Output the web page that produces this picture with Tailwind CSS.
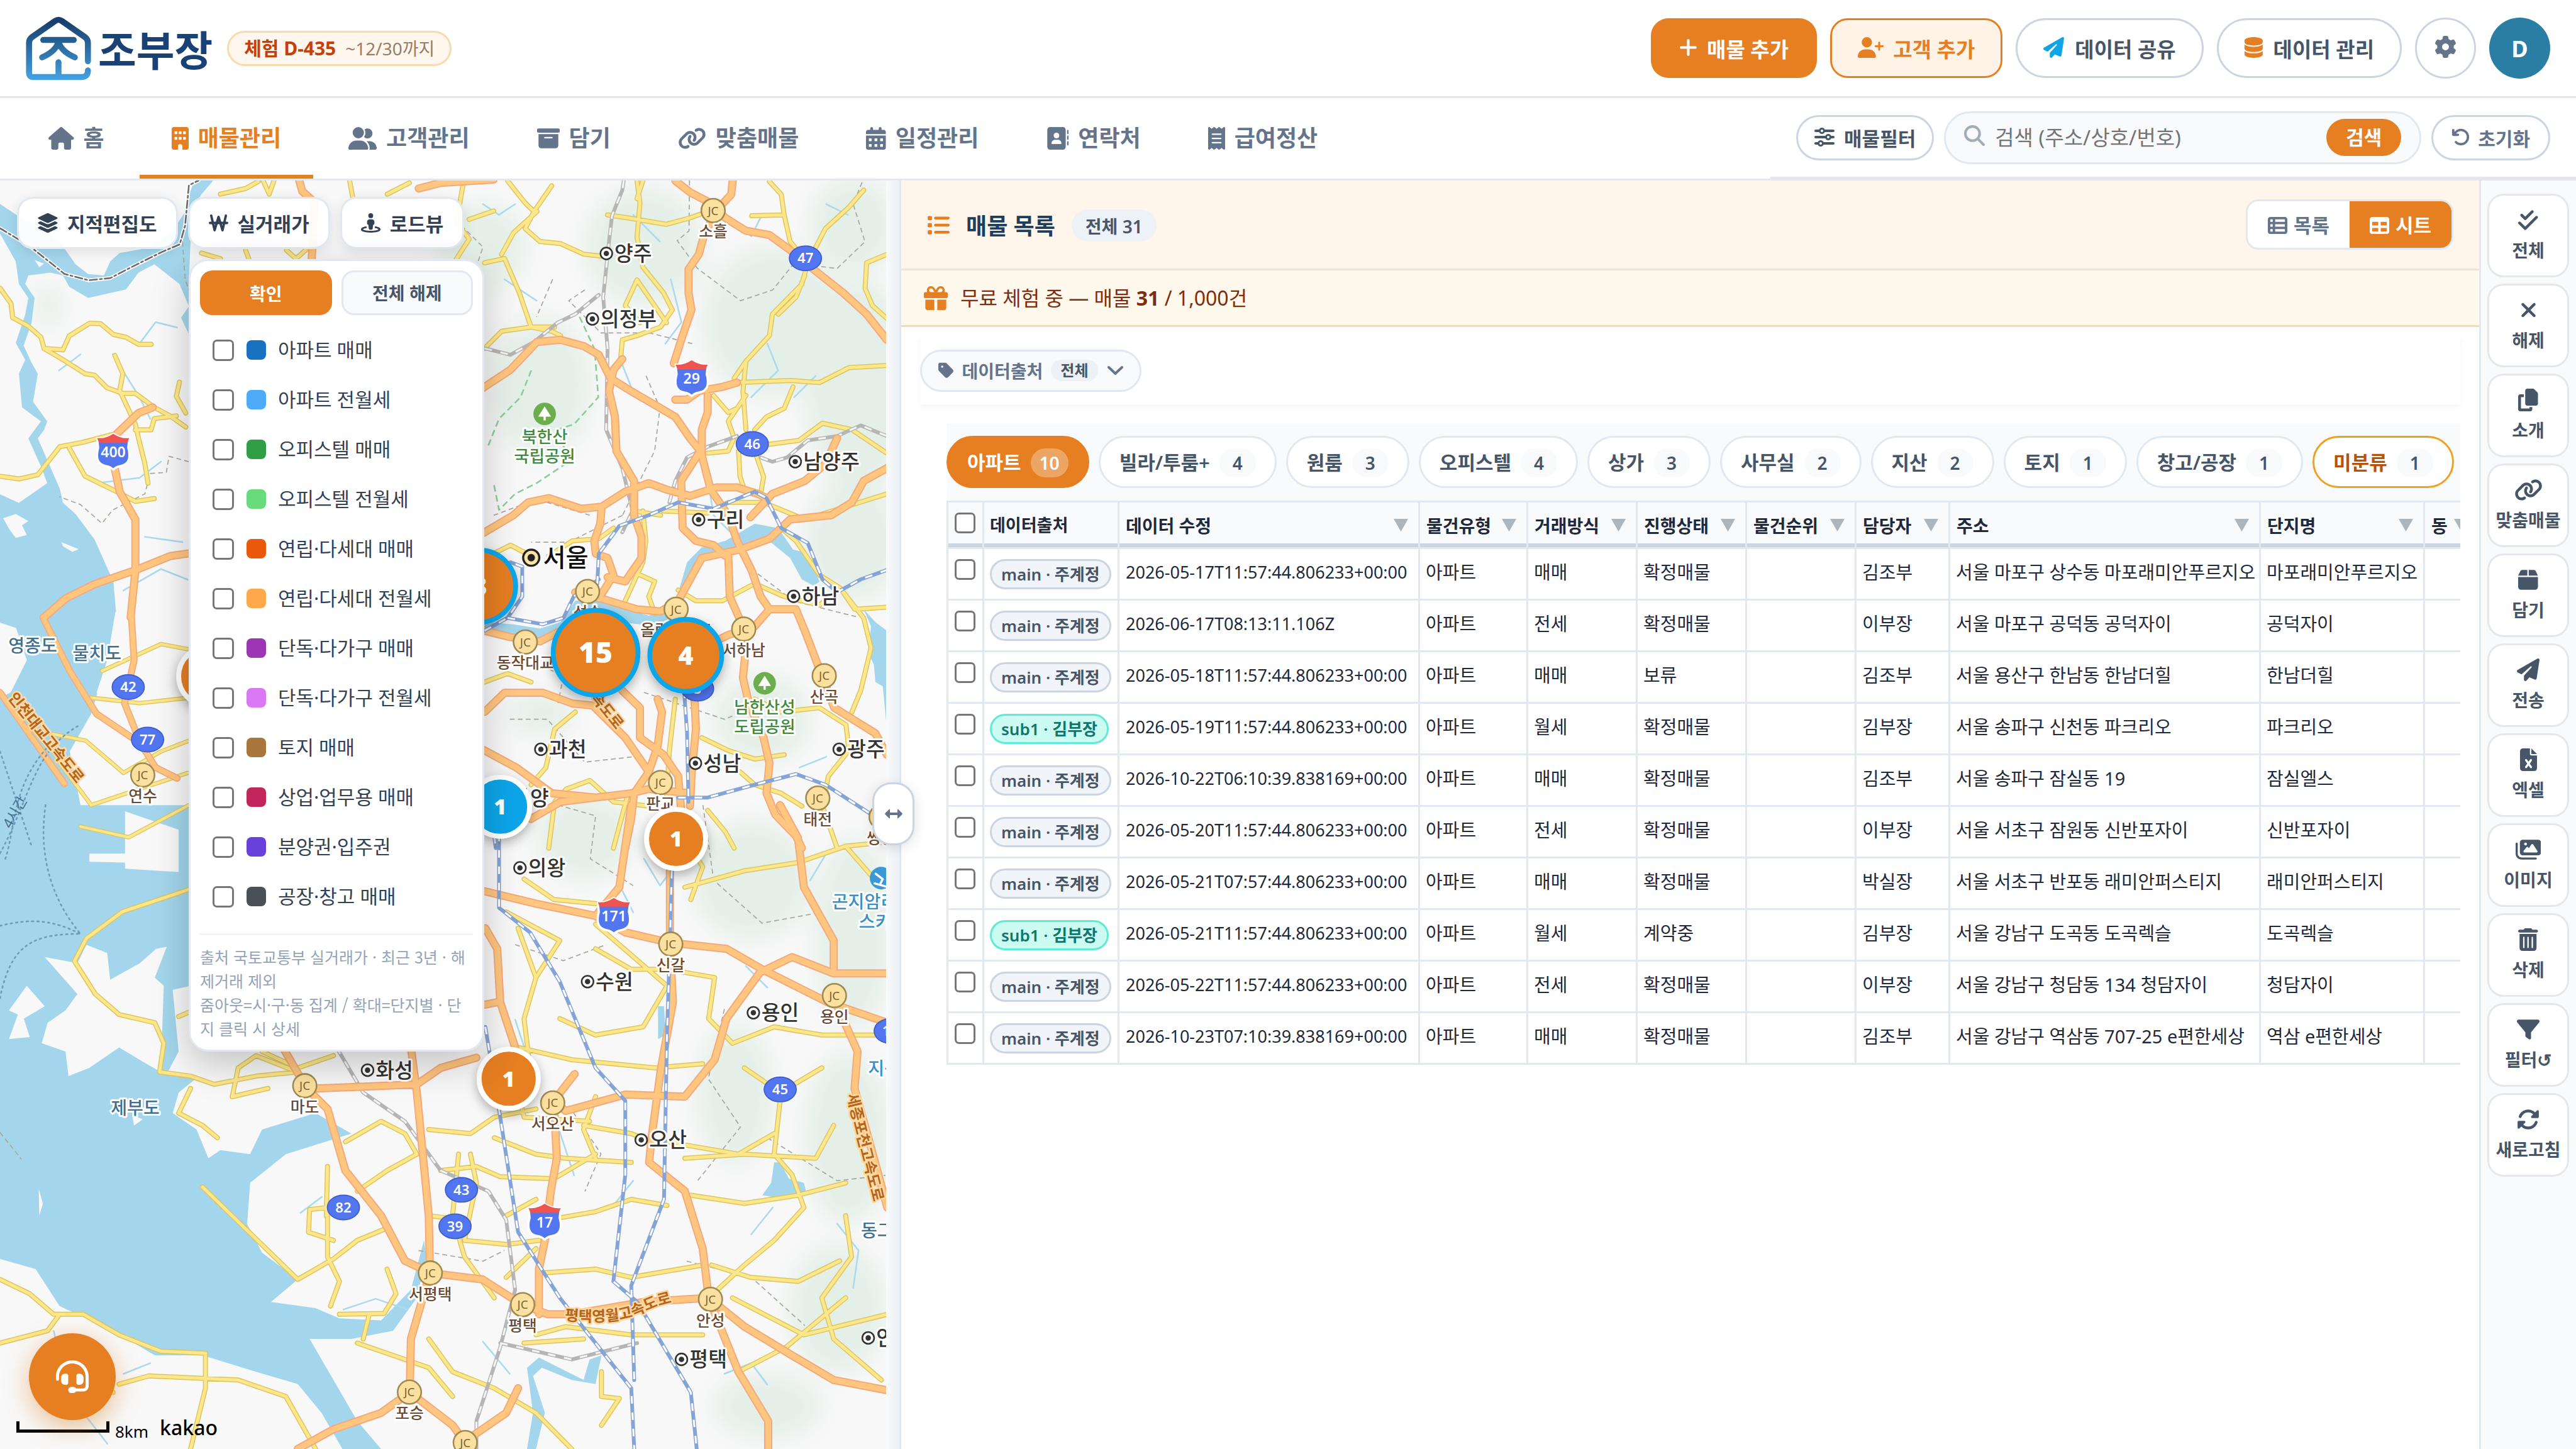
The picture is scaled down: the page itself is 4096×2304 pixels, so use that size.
<!DOCTYPE html>
<html lang="ko">
<head>
    <meta charset="UTF-8">
    <meta name="viewport" content="width=device-width, initial-scale=1.0">
    <title>조부장 - 매물관리</title>
    <script src="https://cdn.jsdelivr.net/npm/@tailwindcss/browser@4"></script>
</head>
<body class="h-screen flex flex-col overflow-hidden bg-white text-[#1e293b] font-['Noto_Sans','Noto_Sans_CJK_KR',sans-serif]">

    <!-- Icon library -->
    <svg class="hidden" aria-hidden="true">
        <defs>
            <path id="i-house" d="M575.8 255.5c0 18-15 32.1-32 32.1h-32l.7 160.2c0 2.7-.2 5.4-.5 8.1V472c0 22.1-17.9 40-40 40H456c-1.1 0-2.2 0-3.3-.1c-1.4 .1-2.8 .1-4.2 .1H416 392c-22.1 0-40-17.9-40-40V448 384c0-17.7-14.3-32-32-32H256c-17.7 0-32 14.3-32 32v64 24c0 22.1-17.9 40-40 40H160 128.1c-1.5 0-3-.1-4.5-.2c-1.2 .1-2.4 .2-3.6 .2H104c-22.1 0-40-17.9-40-40V360c0-.9 0-1.9 .1-2.8V287.6H32c-18 0-32-14-32-32.1c0-9 3-17 10-24L266.4 8c7-7 15-8 22-8s15 2 21 7L564.8 231.5c8 7 12 15 11 24z"/>
            <path id="i-building" d="M48 0C21.5 0 0 21.5 0 48V464c0 26.5 21.5 48 48 48h96V432c0-26.5 21.5-48 48-48s48 21.5 48 48v80h96c26.5 0 48-21.5 48-48V48c0-26.5-21.5-48-48-48H48zM64 240c0-8.8 7.2-16 16-16h32c8.8 0 16 7.2 16 16v32c0 8.8-7.2 16-16 16H80c-8.8 0-16-7.2-16-16V240zm112-16h32c8.8 0 16 7.2 16 16v32c0 8.8-7.2 16-16 16H176c-8.8 0-16-7.2-16-16V240c0-8.8 7.2-16 16-16zm80 16c0-8.8 7.2-16 16-16h32c8.8 0 16 7.2 16 16v32c0 8.8-7.2 16-16 16H272c-8.8 0-16-7.2-16-16V240zM80 96h32c8.8 0 16 7.2 16 16v32c0 8.8-7.2 16-16 16H80c-8.8 0-16-7.2-16-16V112c0-8.8 7.2-16 16-16zm80 16c0-8.8 7.2-16 16-16h32c8.8 0 16 7.2 16 16v32c0 8.8-7.2 16-16 16H176c-8.8 0-16-7.2-16-16V112zM272 96h32c8.8 0 16 7.2 16 16v32c0 8.8-7.2 16-16 16H272c-8.8 0-16-7.2-16-16V112c0-8.8 7.2-16 16-16z"/>
            <path id="i-users" d="M96 128a128 128 0 1 1 256 0A128 128 0 1 1 96 128zM0 482.3C0 383.8 79.8 304 178.3 304h91.4C368.2 304 448 383.8 448 482.3c0 16.4-13.3 29.7-29.7 29.7H29.7C13.3 512 0 498.7 0 482.3zM609.3 512H471.4c5.4-9.4 8.6-20.3 8.6-32v-8c0-60.7-27.1-115.2-69.8-151.8c2.4-.1 4.7-.2 7.1-.2h61.4C567.8 320 640 392.2 640 481.3c0 17-13.8 30.7-30.7 30.7zM432 256c-31 0-59-12.6-79.3-32.9C372.4 196.5 384 163.6 384 128c0-26.8-6.6-52.1-18.3-74.3C384.3 40.1 407.2 32 432 32c61.9 0 112 50.1 112 112s-50.1 112-112 112z"/>
            <path id="i-archive" d="M32 32H480c17.7 0 32 14.3 32 32V96c0 17.7-14.3 32-32 32H32C14.3 128 0 113.7 0 96V64C0 46.3 14.3 32 32 32zm0 128H480V416c0 35.3-28.7 64-64 64H96c-35.3 0-64-28.7-64-64V160zm128 80c0 8.8 7.2 16 16 16H336c8.8 0 16-7.2 16-16s-7.2-16-16-16H176c-8.8 0-16 7.2-16 16z"/>
            <path id="i-link" d="M579.8 267.7c56.5-56.5 56.5-148 0-204.5c-50-50-128.8-56.5-186.3-15.4l-1.6 1.1c-14.4 10.3-17.7 30.3-7.4 44.6s30.3 17.7 44.6 7.4l1.6-1.1c32.1-22.9 76-19.3 103.8 8.6c31.5 31.5 31.5 82.5 0 114L422.3 334.8c-31.5 31.5-82.5 31.5-114 0c-27.9-27.9-31.5-71.8-8.6-103.8l1.1-1.6c10.3-14.4 6.9-34.4-7.4-44.6s-34.4-6.9-44.6 7.4l-1.1 1.6C206.5 251.2 213 330 263 380c56.5 56.5 148 56.5 204.5 0L579.8 267.7zM60.2 244.3c-56.5 56.5-56.5 148 0 204.5c50 50 128.8 56.5 186.3 15.4l1.6-1.1c14.4-10.3 17.7-30.3 7.4-44.6s-30.3-17.7-44.6-7.4l-1.6 1.1c-32.1 22.9-76 19.3-103.8-8.6C74 372 74 321 105.5 289.5L217.7 177.2c31.5-31.5 82.5-31.5 114 0c27.9 27.9 31.5 71.8 8.6 103.9l-1.1 1.6c-10.3 14.4-6.9 34.4 7.4 44.6s34.4 6.9 44.6-7.4l1.1-1.6C433.5 260.8 427 182 377 132c-56.5-56.5-148-56.5-204.5 0L60.2 244.3z"/>
            <path id="i-calendar" d="M128 0c17.7 0 32 14.3 32 32V64H288V32c0-17.7 14.3-32 32-32s32 14.3 32 32V64h48c26.5 0 48 21.5 48 48v48H0V112C0 85.5 21.5 64 48 64H96V32c0-17.7 14.3-32 32-32zM0 192H448V464c0 26.5-21.5 48-48 48H48c-26.5 0-48-21.5-48-48V192zm64 80v32c0 8.8 7.2 16 16 16h32c8.8 0 16-7.2 16-16V272c0-8.8-7.2-16-16-16H80c-8.8 0-16 7.2-16 16zm128 0v32c0 8.8 7.2 16 16 16h32c8.8 0 16-7.2 16-16V272c0-8.8-7.2-16-16-16H208c-8.8 0-16 7.2-16 16zm144-16c-8.8 0-16 7.2-16 16v32c0 8.8 7.2 16 16 16h32c8.8 0 16-7.2 16-16V272c0-8.8-7.2-16-16-16H336zM64 400v32c0 8.8 7.2 16 16 16h32c8.8 0 16-7.2 16-16V400c0-8.8-7.2-16-16-16H80c-8.8 0-16 7.2-16 16zm144-16c-8.8 0-16 7.2-16 16v32c0 8.8 7.2 16 16 16h32c8.8 0 16-7.2 16-16V400c0-8.8-7.2-16-16-16H208zm112 16v32c0 8.8 7.2 16 16 16h32c8.8 0 16-7.2 16-16V400c0-8.8-7.2-16-16-16H336c-8.8 0-16 7.2-16 16z"/>
            <path id="i-contacts" d="M96 0C60.7 0 32 28.7 32 64V448c0 35.3 28.7 64 64 64H384c35.3 0 64-28.7 64-64V64c0-35.3-28.7-64-64-64H96zM208 288h64c44.2 0 80 35.8 80 80c0 8.8-7.2 16-16 16H144c-8.8 0-16-7.2-16-16c0-44.2 35.8-80 80-80zm-32-96a64 64 0 1 1 128 0 64 64 0 1 1 -128 0zM512 80c0-8.8-7.2-16-16-16s-16 7.2-16 16v64c0 8.8 7.2 16 16 16s16-7.2 16-16V80zM496 192c-8.8 0-16 7.2-16 16v64c0 8.8 7.2 16 16 16s16-7.2 16-16V208c0-8.8-7.2-16-16-16zm16 144c0-8.8-7.2-16-16-16s-16 7.2-16 16v64c0 8.8 7.2 16 16 16s16-7.2 16-16V336z"/>
            <path id="i-receipt" d="M14 2.2C22.5-1.7 32.5-.3 39.6 5.8L80 40.4 120.4 5.8c9-7.7 22.3-7.7 31.2 0L192 40.4 232.4 5.8c9-7.7 22.3-7.7 31.2 0L304 40.4 344.4 5.8c7.1-6.1 17.1-7.5 25.6-3.6s14 12.4 14 21.8V488c0 9.4-5.5 17.9-14 21.8s-18.5 2.5-25.6-3.6L304 471.6l-40.4 34.6c-9 7.7-22.3 7.7-31.2 0L192 471.6l-40.4 34.6c-9 7.7-22.3 7.7-31.2 0L80 471.6 39.6 506.2c-7.1 6.1-17.1 7.5-25.6 3.6S0 497.4 0 488V24C0 14.6 5.5 6.1 14 2.2zM96 144c-8.8 0-16 7.2-16 16s7.2 16 16 16H288c8.8 0 16-7.2 16-16s-7.2-16-16-16H96zM80 352c0 8.8 7.2 16 16 16H288c8.8 0 16-7.2 16-16s-7.2-16-16-16H96c-8.8 0-16 7.2-16 16zM96 240c-8.8 0-16 7.2-16 16s7.2 16 16 16H288c8.8 0 16-7.2 16-16s-7.2-16-16-16H96z"/>
            <path id="i-plus" d="M256 80c0-17.7-14.3-32-32-32s-32 14.3-32 32V224H48c-17.7 0-32 14.3-32 32s14.3 32 32 32H192V432c0 17.7 14.3 32 32 32s32-14.3 32-32V288H400c17.7 0 32-14.3 32-32s-14.3-32-32-32H256V80z"/>
            <path id="i-user-plus" d="M96 128a128 128 0 1 1 256 0A128 128 0 1 1 96 128zM0 482.3C0 383.8 79.8 304 178.3 304h91.4C368.2 304 448 383.8 448 482.3c0 16.4-13.3 29.7-29.7 29.7H29.7C13.3 512 0 498.7 0 482.3zM504 312V248H440c-13.3 0-24-10.7-24-24s10.7-24 24-24h64V136c0-13.3 10.7-24 24-24s24 10.7 24 24v64h64c13.3 0 24 10.7 24 24s-10.7 24-24 24H552v64c0 13.3-10.7 24-24 24s-24-10.7-24-24z"/>
            <path id="i-plane" d="M498.1 5.6c10.1 7 15.4 19.1 13.5 31.2l-64 416c-1.5 9.7-7.4 18.2-16 23s-18.9 5.4-28 1.6L284 427.7l-68.5 74.1c-8.9 9.7-22.9 12.9-35.2 8.1S160 493.2 160 480V396.4c0-4 1.5-7.8 4.2-10.7L331.8 202.8c5.8-6.3 5.6-16-.4-22s-15.7-6.4-22-.7L106 360.8 17.7 316.6C7.1 311.3 .3 300.7 0 288.9s5.9-22.8 16.1-28.7l448-256c10.7-6.1 23.9-5.5 34 1.4z"/>
            <path id="i-database" d="M448 80v48c0 44.2-100.3 80-224 80S0 172.2 0 128V80C0 35.8 100.3 0 224 0S448 35.8 448 80zM393.2 214.7c20.8-7.4 39.9-16.9 54.8-28.6V288c0 44.2-100.3 80-224 80S0 332.2 0 288V186.1c14.9 11.8 34 21.2 54.8 28.6C99.7 230.7 159.5 240 224 240s124.3-9.3 169.2-25.3zM0 346.1c14.9 11.8 34 21.2 54.8 28.6C99.7 390.7 159.5 400 224 400s124.3-9.3 169.2-25.3c20.8-7.4 39.9-16.9 54.8-28.6V432c0 44.2-100.3 80-224 80S0 476.2 0 432V346.1z"/>
            <path id="i-gear" d="M495.9 166.6c3.2 8.7 .5 18.4-6.4 24.6l-43.3 39.4c1.1 8.3 1.7 16.8 1.7 25.4s-.6 17.1-1.7 25.4l43.3 39.4c6.9 6.2 9.6 15.9 6.4 24.6c-4.4 11.9-9.7 23.3-15.8 34.3l-4.7 8.1c-6.6 11-14 21.4-22.1 31.2c-5.9 7.2-15.7 9.6-24.5 6.8l-55.7-17.7c-13.4 10.3-28.2 18.9-44 25.4l-12.5 57.1c-2 9.1-9 16.3-18.2 17.8c-13.8 2.3-28 3.5-42.5 3.5s-28.7-1.2-42.5-3.5c-9.2-1.5-16.2-8.7-18.2-17.8l-12.5-57.1c-15.8-6.5-30.6-15.1-44-25.4L83.1 425.9c-8.8 2.8-18.6 .3-24.5-6.8c-8.1-9.8-15.5-20.2-22.1-31.2l-4.7-8.1c-6.1-11-11.4-22.4-15.8-34.3c-3.2-8.7-.5-18.4 6.4-24.6l43.3-39.4C64.6 273.1 64 264.6 64 256s.6-17.1 1.7-25.4L22.4 191.2c-6.9-6.2-9.6-15.9-6.4-24.6c4.4-11.9 9.7-23.3 15.8-34.3l4.7-8.1c6.6-11 14-21.4 22.1-31.2c5.9-7.2 15.7-9.6 24.5-6.8l55.7 17.7c13.4-10.3 28.2-18.9 44-25.4l12.5-57.1c2-9.1 9-16.3 18.2-17.8C227.3 1.2 241.5 0 256 0s28.7 1.2 42.5 3.5c9.2 1.5 16.2 8.7 18.2 17.8l12.5 57.1c15.8 6.5 30.6 15.1 44 25.4l55.7-17.7c8.8-2.8 18.6-.3 24.5 6.8c8.1 9.8 15.5 20.2 22.1 31.2l4.7 8.1c6.1 11 11.4 22.4 15.8 34.3zM256 336a80 80 0 1 0 0-160 80 80 0 1 0 0 160z"/>
            <path id="i-sliders" d="M0 416c0 17.7 14.3 32 32 32l54.7 0c12.3 28.3 40.5 48 73.3 48s61-19.7 73.3-48L480 448c17.7 0 32-14.3 32-32s-14.3-32-32-32l-246.7 0c-12.3-28.3-40.5-48-73.3-48s-61 19.7-73.3 48L32 384c-17.7 0-32 14.3-32 32zm128 0a32 32 0 1 1 64 0 32 32 0 1 1 -64 0zM320 256a32 32 0 1 1 64 0 32 32 0 1 1 -64 0zm32-80c-32.8 0-61 19.7-73.3 48L32 224c-17.7 0-32 14.3-32 32s14.3 32 32 32l246.7 0c12.3 28.3 40.5 48 73.3 48s61-19.7 73.3-48l54.7 0c17.7 0 32-14.3 32-32s-14.3-32-32-32l-54.7 0c-12.3-28.3-40.5-48-73.3-48zM192 128a32 32 0 1 1 0-64 32 32 0 1 1 0 64zm73.3-64C253 35.7 224.8 16 192 16s-61 19.7-73.3 48L32 64C14.3 64 0 78.3 0 96s14.3 32 32 32l86.7 0c12.3 28.3 40.5 48 73.3 48s61-19.7 73.3-48L480 128c17.7 0 32-14.3 32-32s-14.3-32-32-32L265.3 64z"/>
            <path id="i-search" d="M416 208c0 45.9-14.9 88.3-40 122.7L502.6 457.4c12.5 12.5 12.5 32.8 0 45.3s-32.8 12.5-45.3 0L330.7 376c-34.4 25.2-76.8 40-122.7 40C93.1 416 0 322.9 0 208S93.1 0 208 0S416 93.1 416 208zM208 352a144 144 0 1 0 0-288 144 144 0 1 0 0 288z"/>
            <path id="i-undo" d="M125.7 160H176c17.7 0 32 14.3 32 32s-14.3 32-32 32H48c-17.7 0-32-14.3-32-32V64c0-17.7 14.3-32 32-32s32 14.3 32 32v51.2L97.6 97.6c87.5-87.5 229.3-87.5 316.8 0s87.5 229.3 0 316.8s-229.3 87.5-316.8 0c-12.5-12.5-12.5-32.8 0-45.3s32.8-12.5 45.3 0c62.5 62.5 163.8 62.5 226.3 0s62.5-163.8 0-226.3s-163.8-62.5-226.3 0L125.7 160z"/>
            <path id="i-layers" d="M264.5 5.2c14.9-6.9 32.1-6.9 47 0l218.6 101c8.5 3.9 13.9 12.4 13.9 21.8s-5.4 17.9-13.9 21.8l-218.6 101c-14.9 6.9-32.1 6.9-47 0L45.9 149.8C37.4 145.8 32 137.3 32 128s5.4-17.9 13.9-21.8L264.5 5.2zM476.9 209.6l53.2 24.6c8.5 3.9 13.9 12.4 13.9 21.8s-5.4 17.9-13.9 21.8l-218.6 101c-14.9 6.9-32.1 6.9-47 0L45.9 277.8C37.4 273.8 32 265.3 32 256s5.4-17.9 13.9-21.8l53.2-24.6 152 70.2c23.4 10.8 50.4 10.8 73.8 0l152-70.2zm-152 198.2l152-70.2 53.2 24.6c8.5 3.9 13.9 12.4 13.9 21.8s-5.4 17.9-13.9 21.8l-218.6 101c-14.9 6.9-32.1 6.9-47 0L45.9 405.8C37.4 401.8 32 393.3 32 384s5.4-17.9 13.9-21.8l53.2-24.6 152 70.2c23.4 10.8 50.4 10.8 73.8 0z"/>
            <path id="i-street" d="M320 64A64 64 0 1 0 192 64a64 64 0 1 0 128 0zm-96 96c-35.3 0-64 28.7-64 64v48c0 17.7 14.3 32 32 32h1.8l11.1 99.5c1.8 16.2 15.5 28.5 31.8 28.5h38.7c16.3 0 30-12.3 31.8-28.5L318.2 304H320c17.7 0 32-14.3 32-32V224c0-35.3-28.7-64-64-64H224zM132.3 394.2c13-2.4 21.7-14.9 19.3-27.9s-14.9-21.7-27.9-19.3c-32.4 5.9-60.9 14.2-82 24.8c-10.5 5.3-20.3 11.7-27.8 19.6C6.4 399.5 0 410.5 0 424c0 21.4 15.5 36.1 29.1 45c14.7 9.6 34.3 17.3 56.4 23.4C130.2 504.7 190.4 512 256 512s125.8-7.3 170.4-19.6c22.1-6.1 41.8-13.8 56.4-23.4c13.7-8.9 29.1-23.6 29.1-45c0-13.5-6.4-24.5-14-32.6c-7.5-7.9-17.3-14.3-27.8-19.6c-21-10.6-49.5-18.9-82-24.8c-13-2.4-25.5 6.3-27.9 19.3s6.3 25.5 19.3 27.9c30.2 5.5 53.7 12.8 69 20.5c3.2 1.6 5.8 3.1 7.9 4.5c3.6 2.4 3.6 7.2 0 9.6c-8.8 5.7-23.1 11.8-43 17.3C374.3 457 318.5 464 256 464s-118.3-7-157.7-17.9c-19.9-5.5-34.2-11.6-43-17.3c-3.6-2.4-3.6-7.2 0-9.6c2.1-1.4 4.8-2.9 7.9-4.5c15.3-7.7 38.8-14.9 69-20.5z"/>
            <path id="i-list" d="M40 48C26.7 48 16 58.7 16 72v48c0 13.3 10.7 24 24 24H88c13.3 0 24-10.7 24-24V72c0-13.3-10.7-24-24-24H40zM192 64c-17.7 0-32 14.3-32 32s14.3 32 32 32H480c17.7 0 32-14.3 32-32s-14.3-32-32-32H192zm0 160c-17.7 0-32 14.3-32 32s14.3 32 32 32H480c17.7 0 32-14.3 32-32s-14.3-32-32-32H192zm0 160c-17.7 0-32 14.3-32 32s14.3 32 32 32H480c17.7 0 32-14.3 32-32s-14.3-32-32-32H192zM16 232v48c0 13.3 10.7 24 24 24H88c13.3 0 24-10.7 24-24V232c0-13.3-10.7-24-24-24H40c-13.3 0-24 10.7-24 24zM40 368c-13.3 0-24 10.7-24 24v48c0 13.3 10.7 24 24 24H88c13.3 0 24-10.7 24-24V392c0-13.3-10.7-24-24-24H40z"/>
            <path id="i-gift" d="M190.5 68.8L225.3 128H224 152c-22.1 0-40-17.9-40-40s17.9-40 40-40h2.2c14.9 0 28.8 7.9 36.3 20.8zM64 88c0 14.4 3.5 28 9.6 40H32c-17.7 0-32 14.3-32 32v64c0 17.7 14.3 32 32 32H480c17.7 0 32-14.3 32-32V160c0-17.7-14.3-32-32-32H438.4c6.1-12 9.6-25.6 9.6-40c0-48.6-39.4-88-88-88h-2.2c-31.9 0-61.5 16.9-77.7 44.4L256 85.5l-24.1-41C215.7 16.9 186.1 0 154.2 0H152C103.4 0 64 39.4 64 88zm336 0c0 22.1-17.9 40-40 40H288h-1.3l34.8-59.2C329.1 55.9 342.9 48 357.8 48H360c22.1 0 40 17.9 40 40zM32 288V464c0 26.5 21.5 48 48 48H224V288H32zM288 512H432c26.5 0 48-21.5 48-48V288H288V512z"/>
            <path id="i-tag" d="M0 80V229.5c0 17 6.7 33.3 18.7 45.3l176 176c25 25 65.5 25 90.5 0L418.7 317.3c25-25 25-65.5 0-90.5l-176-176c-12-12-28.3-18.7-45.3-18.7H48C21.5 32 0 53.5 0 80zm112 32a32 32 0 1 1 0 64 32 32 0 1 1 0-64z"/>
            <path id="i-table-list" d="M0 96C0 60.7 28.7 32 64 32H448c35.3 0 64 28.7 64 64V416c0 35.3-28.7 64-64 64H64c-35.3 0-64-28.7-64-64V96zm64 0v64h64V96H64zm384 0H192v64H448V96zM64 224v64h64V224H64zm384 0H192v64H448V224zM64 352v64h64V352H64zm384 0H192v64H448V352z"/>
            <path id="i-table" d="M64 256V160H224v96H64zm0 64H224v96H64V320zm224 96V320H448v96H288zM448 256H288V160H448v96zM64 32C28.7 32 0 60.7 0 96V416c0 35.3 28.7 64 64 64H448c35.3 0 64-28.7 64-64V96c0-35.3-28.7-64-64-64H64z"/>
            <path id="i-check-double" d="M342.6 86.6c12.5-12.5 12.5-32.8 0-45.3s-32.8-12.5-45.3 0L160 178.7l-57.4-57.4c-12.5-12.5-32.8-12.5-45.3 0s-12.5 32.8 0 45.3l80 80c12.5 12.5 32.8 12.5 45.3 0l160-160zm96 128c12.5-12.5 12.5-32.8 0-45.3s-32.8-12.5-45.3 0L160 402.7 54.6 297.4c-12.5-12.5-32.8-12.5-45.3 0s-12.5 32.8 0 45.3l128 128c12.5 12.5 32.8 12.5 45.3 0l256-256z"/>
            <path id="i-xmark" d="M342.6 150.6c12.5-12.5 12.5-32.8 0-45.3s-32.8-12.5-45.3 0L192 210.7 86.6 105.4c-12.5-12.5-32.8-12.5-45.3 0s-12.5 32.8 0 45.3L146.7 256 41.4 361.4c-12.5 12.5-12.5 32.8 0 45.3s32.8 12.5 45.3 0L192 301.3 297.4 406.6c12.5 12.5 32.8 12.5 45.3 0s12.5-32.8 0-45.3L237.3 256 342.6 150.6z"/>
            <path id="i-copy" d="M208 0H332.1c12.7 0 24.9 5.1 33.9 14.1l67.9 67.9c9 9 14.1 21.2 14.1 33.9V336c0 26.5-21.5 48-48 48H208c-26.5 0-48-21.5-48-48V48c0-26.5 21.5-48 48-48zM48 128h80v64H64V448H256V416h64v48c0 26.5-21.5 48-48 48H48c-26.5 0-48-21.5-48-48V176c0-26.5 21.5-48 48-48z"/>
            <path id="i-box" d="M50.7 58.5L0 160H208V32H93.7C75.5 32 58.9 42.3 50.7 58.5zM240 160H448L397.3 58.5C389.1 42.3 372.5 32 354.3 32H240V160zm208 32H0V416c0 35.3 28.7 64 64 64H384c35.3 0 64-28.7 64-64V192z"/>
            <path id="i-excel" d="M64 0C28.7 0 0 28.7 0 64V448c0 35.3 28.7 64 64 64H320c35.3 0 64-28.7 64-64V160H256c-17.7 0-32-14.3-32-32V0H64zM256 0V128H384L256 0zM155.7 250.2L192 302.1l36.3-51.9c7.6-10.9 22.6-13.5 33.4-5.9s13.5 22.6 5.9 33.4L221.3 344l46.4 66.2c7.6 10.9 5 25.8-5.9 33.4s-25.8 5-33.4-5.9L192 385.8l-36.3 51.9c-7.6 10.9-22.6 13.5-33.4 5.9s-13.5-22.6-5.9-33.4L162.7 344l-46.4-66.2c-7.6-10.9-5-25.8 5.9-33.4s25.8-5 33.4 5.9z"/>
            <path id="i-images" d="M160 32c-35.3 0-64 28.7-64 64V320c0 35.3 28.7 64 64 64H512c35.3 0 64-28.7 64-64V96c0-35.3-28.7-64-64-64H160zM396 138.7l96 144c4.9 7.4 5.4 16.8 1.2 24.6S480.9 320 472 320H328 280 200c-9.2 0-17.6-5.3-21.6-13.6s-2.9-18.2 2.9-25.4l64-80c4.6-5.7 11.4-9 18.7-9s14.2 3.3 18.7 9l17.3 21.6 56-84C360.5 132 368 128 376 128s15.5 4 20 10.7zM192 128a32 32 0 1 1 64 0 32 32 0 1 1 -64 0zM48 120c0-13.3-10.7-24-24-24S0 106.7 0 120V344c0 75.1 60.9 136 136 136H456c13.3 0 24-10.7 24-24s-10.7-24-24-24H136c-48.6 0-88-39.4-88-88V120z"/>
            <path id="i-trash" d="M135.2 17.7C140.6 6.8 151.7 0 163.8 0H284.2c12.1 0 23.2 6.8 28.6 17.7L320 32h96c17.7 0 32 14.3 32 32s-14.3 32-32 32H32C14.3 96 0 81.7 0 64S14.3 32 32 32h96l7.2-14.3zM32 128H416V448c0 35.3-28.7 64-64 64H96c-35.3 0-64-28.7-64-64V128zm96 64c-8.8 0-16 7.2-16 16V432c0 8.8 7.2 16 16 16s16-7.2 16-16V208c0-8.8-7.2-16-16-16zm96 0c-8.8 0-16 7.2-16 16V432c0 8.8 7.2 16 16 16s16-7.2 16-16V208c0-8.8-7.2-16-16-16zm96 0c-8.8 0-16 7.2-16 16V432c0 8.8 7.2 16 16 16s16-7.2 16-16V208c0-8.8-7.2-16-16-16z"/>
            <path id="i-filter" d="M3.9 54.9C10.5 40.9 24.5 32 40 32H472c15.5 0 29.5 8.9 36.1 22.9s4.6 30.5-5.2 42.5L320 320.9V448c0 12.1-6.8 23.2-17.7 28.6s-23.8 4.3-33.5-3l-64-48c-8.1-6-12.8-15.5-12.8-25.6V320.9L9 97.3C-.7 85.4-2.8 68.8 3.9 54.9z"/>
            <path id="i-rotate" d="M142.9 142.9c62.2-62.2 162.7-62.5 225.3-1L327 183c-6.9 6.9-8.9 17.2-5.2 26.2s12.5 14.8 22.2 14.8H463.5H472c13.3 0 24-10.7 24-24V72c0-9.7-5.8-18.5-14.8-22.2s-19.3-1.7-26.2 5.2L413.4 96.6c-87.6-86.5-228.7-86.2-315.8 1C73.2 122 55.6 150.7 44.8 181.4c-5.9 16.7 2.9 34.9 19.5 40.8s34.9-2.9 40.8-19.5c7.7-21.8 20.2-42.3 37.8-59.8zM16 312v7.6 .7V440c0 9.7 5.8 18.5 14.8 22.2s19.3 1.7 26.2-5.2l41.6-41.6c87.6 86.5 228.7 86.2 315.8-1c24.4-24.4 42.1-53.1 52.9-83.7c5.9-16.7-2.9-34.9-19.5-40.8s-34.9 2.9-40.8 19.5c-7.7 21.8-20.2 42.3-37.8 59.8c-62.2 62.2-162.7 62.5-225.3 1L185 329c6.9-6.9 8.9-17.2 5.2-26.2s-12.5-14.8-22.2-14.8H48.4h-.7H40c-13.3 0-24 10.7-24 24z"/>
            <path id="i-headset" d="M256 48C141.1 48 48 141.1 48 256v40c0 13.3-10.7 24-24 24s-24-10.7-24-24V256C0 114.6 114.6 0 256 0S512 114.6 512 256V400.1c0 48.6-39.4 88-88.1 88L313.6 488c-8.3 14.3-23.8 24-41.6 24H240c-26.5 0-48-21.5-48-48s21.5-48 48-48h32c17.8 0 33.3 9.7 41.6 24l110.4 .1c22.1 0 40-17.9 40-40V256c0-114.9-93.1-208-208-208zM144 208h16c17.7 0 32 14.3 32 32V352c0 17.7-14.3 32-32 32H144c-35.3 0-64-28.7-64-64V272c0-35.3 28.7-64 64-64zm224 0c35.3 0 64 28.7 64 64v48c0 35.3-28.7 64-64 64H352c-17.7 0-32-14.3-32-32V240c0-17.7 14.3-32 32-32h16z"/>
        </defs>
    </svg>

    <!-- Header -->
    <header class="flex-none h-[156px] flex items-center justify-between px-[41px] border-b-[3px] border-[#e5e7eb]">
        <div class="flex items-center">
            <a href="#" class="flex items-center" aria-label="조부장">
                <svg class="w-[104px] h-[102px]" viewBox="0 0 120 117" fill="none" stroke="url(#logo-fill)" stroke-width="11" stroke-linejoin="round" stroke-linecap="round">
                    <defs>
                        <linearGradient id="logo-fill" gradientUnits="userSpaceOnUse" x1="0" y1="0" x2="0" y2="117">
                            <stop offset="0.1" stop-color="#18406f"/>
                            <stop offset="1" stop-color="#45a3e3"/>
                        </linearGradient>
                    </defs>
                    <path d="M114 82V48Q114 42 109 38L66 8Q60 4 54 8L11 38Q6 42 6 48V103Q6 111 14 111H102Q114 111 114 99"/>
                    <path d="M32 43H88M60 44Q58 62 30 75M60 44Q62 62 90 75M60 84V110"/>
                </svg>
                <span class="ml-[11px] pt-[4px] text-[66px] leading-[72px] font-bold text-[#1a4173]">조부장</span>
            </a>
            <div class="ml-[23px] h-[56px] px-[24px] flex items-center gap-[15px] rounded-full border-[3px] border-[#fcd9ab] bg-[#fff7ed] text-[28px]">
                <strong class="text-[30px] font-bold text-[#c2410c]">체험 D-435</strong>
                <span class="text-[#9a7b66]">~12/30까지</span>
            </div>
        </div>
        <div class="flex items-center gap-[21px] text-[33px] font-bold">
            <button class="h-[95px] px-[45px] pt-[4px] flex items-center gap-[15px] rounded-[28px] bg-[#e67e22] text-white">
                <svg class="h-[33px] mb-[7px] flex-none" viewBox="0 0 448 512" fill="currentColor"><use href="#i-plus"/></svg>매물 추가
            </button>
            <button class="h-[95px] px-[41px] pt-[4px] flex items-center gap-[15px] rounded-[28px] border-[3px] border-[#e67e22] bg-[#fff3e8] text-[#e67e22]">
                <svg class="h-[33px] mb-[7px] flex-none" viewBox="0 0 640 512" fill="currentColor"><use href="#i-user-plus"/></svg>고객 추가
            </button>
            <button class="h-[95px] px-[41px] pt-[4px] flex items-center gap-[17px] rounded-full border-[3px] border-[#cbd5e1] bg-white text-[#475569]">
                <svg class="h-[33px] mb-[7px] flex-none text-[#0ea5e9]" viewBox="0 0 512 512" fill="currentColor"><use href="#i-plane"/></svg>데이터 공유
            </button>
            <button class="h-[95px] px-[41px] pt-[4px] flex items-center gap-[17px] rounded-full border-[3px] border-[#cbd5e1] bg-white text-[#475569]">
                <svg class="h-[33px] mb-[7px] flex-none text-[#e67e22]" viewBox="0 0 448 512" fill="currentColor"><use href="#i-database"/></svg>데이터 관리
            </button>
            <button class="size-[97px] flex items-center justify-center rounded-full border-[3px] border-[#cbd5e1] bg-white text-[#64748b]" aria-label="설정">
                <svg class="h-[35px] mb-[4px]" viewBox="0 0 512 512" fill="currentColor"><use href="#i-gear"/></svg>
            </button>
            <button class="size-[97px] pt-[3px] rounded-full bg-[#2b7ea3] text-[36px] text-white">D</button>
        </div>
    </header>

    <!-- Navigation -->
    <nav class="flex-none h-[131px] flex items-stretch justify-between border-b-[3px] border-[#e5e7eb]">
        <div class="flex items-stretch gap-[5px] pl-[26px] text-[36px] font-bold text-[#64748b]">
            <a href="#" class="flex items-center gap-[15px] px-[51px]"><svg class="h-[36px] flex-none" viewBox="0 0 576 512" fill="currentColor"><use href="#i-house"/></svg>홈</a>
            <a href="#" class="relative flex items-center gap-[15px] px-[51px] text-[#e67e22] after:absolute after:inset-x-0 after:bottom-0 after:h-[6px] after:bg-[#e67e22]"><svg class="h-[36px] flex-none" viewBox="0 0 384 512" fill="currentColor"><use href="#i-building"/></svg>매물관리</a>
            <a href="#" class="flex items-center gap-[15px] px-[51px]"><svg class="h-[36px] flex-none" viewBox="0 0 640 512" fill="currentColor"><use href="#i-users"/></svg>고객관리</a>
            <a href="#" class="flex items-center gap-[15px] px-[51px]"><svg class="h-[36px] flex-none" viewBox="0 0 512 512" fill="currentColor"><use href="#i-archive"/></svg>담기</a>
            <a href="#" class="flex items-center gap-[15px] px-[51px]"><svg class="h-[36px] flex-none" viewBox="0 0 640 512" fill="currentColor"><use href="#i-link"/></svg>맞춤매물</a>
            <a href="#" class="flex items-center gap-[15px] px-[51px]"><svg class="h-[36px] flex-none" viewBox="0 0 448 512" fill="currentColor"><use href="#i-calendar"/></svg>일정관리</a>
            <a href="#" class="flex items-center gap-[15px] px-[51px]"><svg class="h-[36px] flex-none" viewBox="0 0 512 512" fill="currentColor"><use href="#i-contacts"/></svg>연락처</a>
            <a href="#" class="flex items-center gap-[15px] px-[51px]"><svg class="h-[36px] flex-none" viewBox="0 0 384 512" fill="currentColor"><use href="#i-receipt"/></svg>급여정산</a>
        </div>
        <div class="flex items-center gap-[16px] px-[41px] border-b-[3px] border-[#e5e7eb]">
            <button class="h-[72px] px-[26px] pt-[3px] flex items-center gap-[15px] rounded-full border-[3px] border-[#cbd5e1] bg-white text-[31px] font-bold text-[#475569]">
                <svg class="h-[32px] mb-[5px] flex-none" viewBox="0 0 512 512" fill="currentColor"><use href="#i-sliders"/></svg>매물필터
            </button>
            <form class="w-[759px] h-[84px] px-[29px] flex items-center gap-[16px] rounded-full border-[3px] border-[#e2e8f0] bg-[#f8fafc]">
                <svg class="h-[33px] mb-[6px] flex-none text-[#a3adb8]" viewBox="0 0 512 512" fill="currentColor"><use href="#i-search"/></svg>
                <input type="text" aria-label="검색" placeholder="검색 (주소/상호/번호)" class="flex-1 min-w-0 bg-transparent text-[33px] placeholder:text-[#757575] outline-none">
                <button type="button" class="w-[119px] h-[59px] rounded-full bg-[#e67e22] text-[31px] leading-[59px] font-bold text-white">검색</button>
            </form>
            <button class="h-[72px] px-[29px] pt-[3px] flex items-center gap-[12px] rounded-full border-[3px] border-[#cbd5e1] bg-white text-[30px] font-semibold text-[#64748b]">
                <svg class="h-[30px] mb-[5px] flex-none" viewBox="0 0 512 512" fill="currentColor"><use href="#i-undo"/></svg>초기화
            </button>
        </div>
    </nav>

    <main class="flex-1 min-h-0 flex">
        <!-- Map -->
        <section class="relative w-[34.4%] flex-none overflow-hidden bg-[#f8f8f8]">
            <svg class="absolute inset-0 w-full h-full" viewBox="0 336 1653 2364" preserveAspectRatio="xMinYMin slice" fill="none" stroke-linejoin="round" stroke-linecap="round">
                <defs>
                    <filter id="soft" x="-30%" y="-30%" width="160%" height="160%"><feGaussianBlur stdDeviation="22"/></filter>
                    <filter id="drop" x="-40%" y="-40%" width="180%" height="180%"><feDropShadow dx="0" dy="8" stdDeviation="10" flood-opacity="0.3"/></filter>
                    <g id="motorways">
                        <path class="[vector-effect:non-scaling-stroke]" transform="translate(880 330) scale(.5485 .7972)" d="M690 8L740 35 810 60 860 95 930 125 1010 135 1080 170 1150 210 1260 270 1340 320 1409 380M885 8L880 40 840 70 790 130 770 180 735 215 735 270 745 310 715 370 685 435M-60 540L42 490 130 450 220 385 300 380 380 395 430 415 470 470 540 500 640 540 690 560 740 610 775 640M510 425L480 450 465 500 485 560 490 640 550 710 550 790 575 840 575 890 520 945 460 935M690 520L730 520 770 500 850 490 900 480M800 510L800 550 780 590 780 650 810 730 870 790 900 850 950 920 980 980 1010 1010M775 640L710 710 715 820 760 850 820 860 860 885M-60 860L42 830 140 790 190 760 260 750 370 775 440 770 520 735 600 715 660 730 740 745 830 725 900 725 970 740 1000 750M440 770L435 810 415 850 420 880 460 890 480 930 430 985M1240 610L1200 670 1130 710 1020 740 945 795M1409 680L1330 710 1290 760 1220 790 1080 800 1010 845 910 870 780 890 740 940 700 990 640 1015 560 1010 440 985 350 970M870 880L875 980 920 1050 930 1100 920 1170 940 1230 990 1310 1010 1370 1000 1440 1030 1490 1100 1540 1120 1568M1010 1010L1100 1010 1130 1060 1180 1150 1230 1240 1300 1270 1370 1300 1409 1350M1010 1010L960 1050 870 1070 840 1080M42 1060L130 1075 230 1085 330 1050 420 1010M42 1250L110 1205 240 1205 340 1230 410 1235 520 1310 600 1390M510 1200L570 1240 570 1310 650 1350 700 1400 710 1480M630 1220L645 1250 630 1330 600 1390 550 1440 540 1500 520 1568M-60 1310L42 1340 150 1380 270 1440 420 1450 540 1440 600 1430 740 1440M200 1500L300 1460 420 1450M755 1210L760 1290 745 1400 740 1470"/>
                        <path class="[vector-effect:non-scaling-stroke]" transform="translate(0 1500) scale(1.1098 .7653)" d="M475 590L515 690 550 740 580 890 640 1000 680 1110 725 1140 810 1155 875 1215 920 1240 960 1240 1080 1210 1190 1200 1250 1270 1330 1340 1400 1400 1490 1425M530 690L620 685 700 680 740 640 800 615M690 590L700 700 710 850 720 1000 722 1140 690 1300 688 1430 640 1480 560 1520 500 1568M688 1430L760 1510 780 1550 850 1480 870 1420M800 205L900 240 1000 270 1050 310 1125 335 1220 350 1280 400 1390 480 1490 530M1060 0L1040 200 1000 270M1125 160L1125 340 1130 480 1110 640 1095 800 1090 870 1150 940 1180 1080 1190 1200 1240 1380 1290 1500 1290 1568M1310 0L1340 80 1350 200 1400 330 1400 410 1490 410M1400 470L1440 600 1435 690 1460 820 1490 980M1280 400L1220 520 1200 620 1150 710 1050 705 950 745 930 720 965 655M930 720L935 860 925 940 915 1060 905 1130 905 1240M815 300L835 350 840 480 865 590M1280 405L1330 370 1400 410M800 490L835 480"/>
                        <path class="[vector-effect:non-scaling-stroke]" transform="translate(0 330) scale(.5868 .523)" d="M1330 40L1400 20 1568 8M950 10L960 50 1000 90 990 290M370 915L440 840 485 820M365 1040L380 1120 430 1220 430 1400 415 1568M140 1568L210 1500 300 1450 430 1400 540 1350 600 1340"/>
                        <path d="M245 1150L250 1230 232 1310 262 1385 290 1430 330 1450M80 1150L130 1250 180 1330 262 1385M0 1290L120 1460"/>
                    </g>
                    <g id="roads">
                        <path class="[vector-effect:non-scaling-stroke]" transform="translate(880 330) scale(.5485 .7972)" d="M42 200L110 190 160 270 200 350 270 360 300 370M120 8L180 60 210 80 270 20M210 80L180 120 230 150 300 155 380 180 450 185M100 180L140 130 220 80M560 8L570 60 560 140 580 210 650 270 680 310 640 350 560 370 510 380 505 420M580 8L560 50M460 88L530 95 660 110 740 95 800 80M950 90L1060 88 1050 40 1010 10M1060 88L1080 150 1140 200 1120 250 1020 320 1010 370 930 430 890 470M1140 200L1200 120 1280 70 1330 30M1409 180L1340 200 1335 260 1360 300 1409 330M1040 320L1100 280 1130 230M900 480L1080 475 1180 480 1280 445 1409 440M820 510L870 550 900 540 930 510M930 430L920 500 930 590M960 590L1000 560 1060 540 1090 490M900 540L870 570 890 610 870 640 800 645M1000 625L1110 615 1190 575 1290 590 1409 645M905 640L910 700 930 740M960 640L990 700 980 740M660 340L560 240 520 300 570 340M42 400L100 360 200 350 280 350M650 780L800 785 870 760 990 760 1130 800 1409 740M580 780L590 850 580 900 520 990M540 920L620 945 600 980 620 1020M700 965L760 990 850 990 960 950 1060 980 1180 1000 1250 960 1300 1010 1409 1005M1180 930L1250 960 1330 1030 1355 1100 1320 1200 1290 1250M1050 820L1100 850 1180 930M960 1220L1050 1250 1180 1240 1270 1280 1280 1340 1210 1400 1190 1470 1240 1568M42 890L130 860 200 885M260 885L340 850 430 845 480 820M260 1568L280 1460 320 1430 400 1410 480 1460 600 1470M200 1420L250 1380 280 1290 350 1250M690 1220L670 1340 660 1450M780 1310L870 1340 960 1360 1060 1350M910 1390L960 1420 1050 1440 1120 1470M530 1440L480 1568M800 1480L860 1530 890 1568M550 780L640 790M42 1180L120 1160 200 1180"/>
                        <path class="[vector-effect:non-scaling-stroke]" transform="translate(0 1500) scale(1.1098 .7653)" d="M318 205L205 260 145 325 125 380 160 460 200 510 260 530 275 580 268 650 320 660 360 680 430 660 500 650M320 690L300 750 340 780 365 810M500 650L430 610 400 640 390 710 450 690M340 930L500 1155 560 1105 600 1060 650 1030M555 1220L570 1160 550 1100 550 980 520 985 518 1040 560 1060M550 880L548 1000M570 1240L645 1238 665 1190 650 1130M580 820L640 770 680 800 700 850 650 890 600 940M720 790L790 800 830 760 900 740M740 890L800 880 840 905 930 910 1000 850M830 810L900 850 950 860 1060 870M770 850L760 1000 780 1100 830 1200M790 850L800 920 780 1060 850 1070 905 1060M940 1005L1000 990 1060 960 1120 975M905 1140L1000 1130 1060 1150 1180 1120M1160 950L1250 970 1340 950 1420 920M1150 860L1250 850 1370 860 1400 780M1310 720L1300 850 1330 900 1350 980 1300 1060 1250 1120 1190 1200M1195 1120L1260 1150 1340 1160 1410 1110M1420 1000L1430 1100 1380 1200 1400 1300 1480 1400M1230 1200L1350 1290 1490 1240M1240 1380L1320 1320 1420 1200M0 1155L50 1190 90 1240 140 1240 200 1290 270 1330 345 1335 345 1420 320 1568M0 1310L80 1280 100 1240M200 1410L250 1390 400 1400 480 1440 530 1568M90 1420L190 1430M720 1300L760 1380 830 1420 900 1480 960 1568M600 1310L720 1370 760 1440M900 1290L950 1270 1060 1290 1180 1290M880 1310L980 1300M870 300L900 420 880 520 890 640M850 260L940 330 900 420M880 180L930 230 1000 240M1000 350L1060 400 1120 400 1200 420M940 520L1000 560 1080 540 1120 440 1000 290M870 590L960 620 1100 640 1180 630M1200 420L1190 520 1230 580 1300 540 1380 560 1490 560M1250 640L1310 700 1380 640M980 780L1060 800 1095 820M1000 710L980 790 1000 860M1150 200L1250 160 1340 140 1420 100 1490 90M1140 60L1180 150 1160 230M1420 100L1480 200M620 1240L610 1300M440 600L500 640 560 610M1120 820L1240 850 1300 800M860 640L880 760 990 770M300 515L316 505M1010 1380L1010 1440 1040 1445 1010 1510M720 1000L780 1010M850 1000L900 960M900 1080L850 1150"/>
                        <path class="[vector-effect:non-scaling-stroke]" transform="translate(0 330) scale(.5868 .523)" d="M0 395L35 450 40 500 90 530 130 570 140 610 200 650 270 700 300 705 340 750 390 770 430 770 490 820 540 850 590 890M200 615L220 565 285 520 320 522 360 560 400 570 440 595 480 595M140 610L200 615M365 635L390 700 380 760 430 880 440 930 460 1020 470 1090M570 730L560 780 590 840M430 900L480 900 490 860 560 850M0 1065L60 1075 120 1060 190 960 260 945 380 910M220 965L270 1065 370 1120 430 1155 490 1145M700 60L780 40 820 15M835 10L855 60 870 12M640 270L700 290M780 260L790 290M910 260L940 290 970 260M1110 10L1120 70M1230 60L1300 20M1470 30L1450 160 1490 220 1450 290M1568 120L1490 150"/>
                        <path d="M110 1420L170 1500 260 1470 350 1440M60 1360L160 1380 230 1440 300 1400 352 1380M150 1540L240 1560 352 1500M190 1250L300 1200 352 1210M170 1300L260 1310 352 1300"/>
                    </g>
                    <g id="rail">
                        <path class="[vector-effect:non-scaling-stroke]" transform="translate(880 330) scale(.5485 .7972)" d="M515 8L510 30 475 90 465 150 445 280 460 400 455 590 510 680 545 780 510 830M-60 430L42 400 130 415 210 385 290 340 350 320 430 275M670 760L690 710 730 655 800 630 900 605M980 655L1020 665 1070 655 1140 615 1240 605 1320 580 1409 605"/>
                        <path class="[vector-effect:non-scaling-stroke]" transform="translate(0 1500) scale(1.1098 .7653)" d="M565 590L610 700 680 770 740 890 820 940 850 1010 865 1180 840 1320 800 1500 800 1568M840 1310L960 1350 1070 1310"/>
                    </g>
                    <g id="metro">
                        <path class="[vector-effect:non-scaling-stroke]" transform="translate(880 330) scale(.5485 .7972)" d="M425 950L430 880 500 815 600 790 700 760 820 775 960 735 1000 750 1050 820 1140 855 1190 940 1240 970 1320 940 1409 918M42 1060L120 1030 170 980 170 910 130 900M120 1030L240 1045 310 1030 345 980 430 940M720 1200L730 1300 735 1460M700 1450L800 1450 960 1420 1100 1395 1200 1420 1380 1500M75 1540L80 1568"/>
                        <path class="[vector-effect:non-scaling-stroke]" transform="translate(0 1500) scale(1.1098 .7653)" d="M838 70L838 250 890 310 940 430 1000 640 1050 720 1050 900 1030 1160 1070 1210 1160 1430 1170 1568M815 540L840 760 870 1040 940 1200 1060 1420 1065 1568M1128 160L1125 340 1120 560 1115 960 1060 1170 1065 1400"/>
                    </g>
                </defs>

                <!-- hills -->
                <g fill="#e4efe8" filter="url(#soft)">
                    <ellipse cx="1010" cy="720" rx="90" ry="130"/>
                    <ellipse cx="1200" cy="460" rx="110" ry="110"/>
                    <ellipse cx="1440" cy="600" rx="130" ry="140"/>
                    <ellipse cx="1600" cy="720" rx="100" ry="200"/>
                    <ellipse cx="1590" cy="420" rx="80" ry="90"/>
                    <ellipse cx="1590" cy="1010" rx="90" ry="110"/>
                    <ellipse cx="1420" cy="1340" rx="90" ry="80"/>
                    <ellipse cx="1010" cy="1330" rx="60" ry="40"/>
                    <ellipse cx="1090" cy="1560" rx="90" ry="80"/>
                    <ellipse cx="1400" cy="1640" rx="110" ry="110"/>
                    <ellipse cx="1590" cy="1740" rx="70" ry="180"/>
                    <ellipse cx="1370" cy="2040" rx="70" ry="130"/>
                    <ellipse cx="1580" cy="2120" rx="80" ry="160"/>
                    <ellipse cx="1560" cy="2440" rx="90" ry="120"/>
                    <ellipse cx="1430" cy="2620" rx="100" ry="60"/>
                    <ellipse cx="90" cy="570" rx="24" ry="40"/>
                    <ellipse cx="900" cy="460" rx="80" ry="80"/>
                    <ellipse cx="140" cy="2620" rx="60" ry="30"/>
                </g>

                <!-- water -->
                <g fill="#a3d6ec">
                    <path transform="translate(0 330) scale(.5868 .523)" d="M0 95L60 140 130 180 190 230 240 310 280 345 330 350 350 300 380 270 480 250 560 170 590 120 600 60 620 8H680L640 60 610 110 600 360V560L575 500 600 460 570 380 490 310 440 340 400 400 280 430 220 390 200 350 160 340 90 350 80 380 110 430 100 520 75 600 100 660 120 700 105 800 150 870 140 900 120 930 190 1110 200 1160 240 1200 300 1290 340 1390 360 1440 370 1568H0V1130L60 1160 150 1090 130 1030 90 930 130 870 70 820 60 700 80 650 50 590 80 490 90 430 60 380 50 300 0 200Z"/>
                    <path d="M0 1145H215L200 1230 170 1330 130 1400 150 1500 200 1560 352 1600V1700H0Z"/>
                    <path transform="translate(0 1500) scale(1.1098 .7653)" d="M0 0H320V440L290 450 300 600 280 655 330 665 300 700 290 750 330 790 350 860 370 840 420 850 440 790 530 750 590 800 480 850 420 920 415 1020 440 1090 500 1155 455 1210 530 1225 570 1250 640 1255 690 1180 712 1060 716 1100 700 1200 660 1280 590 1300 520 1300 560 1400 600 1500 640 1568H575L540 1480 500 1410 430 1380 340 1340 260 1340 190 1280 100 1220 60 1130 0 1105Z"/>
                    <path transform="translate(880 330) scale(.5485 .7972)" d="M42 1040L140 1045 230 1055 300 1040 350 990 420 985 500 1005 600 1025 690 995 730 900 780 865 860 850 960 810 1040 820 1090 870 1140 880 1180 945 1160 955 1120 940 1080 890 1000 845 870 875 780 890 740 950 700 1020 620 1050 400 1030 340 1040 240 1085 100 1080 42 1070ZM1330 1010L1355 1050 1345 1110 1365 1140 1370 1180 1395 1190 1409 1290V1060L1370 1040Z"/>
                    <path transform="translate(0 1500) scale(1.1098 .7653)" d="M1300 870L1295 920 1280 950 1320 960 1355 950 1350 920 1325 910 1310 870ZM885 1370L905 1345 980 1400 990 1350 1010 1340 1000 1410 960 1400 910 1370 895 1390 915 1480 900 1568H885L895 1480ZM1105 490L1115 490 1118 560 1105 570Z"/>
                </g>

                <!-- islands -->
                <g fill="#f8f8f8">
                    <path transform="translate(0 1500) scale(1.1098 .7653)" d="M145 340L180 360 185 425 235 385 262 350 280 345 260 420 275 440 270 650 240 625 200 590 150 640 115 660 110 600 70 580 80 530 110 500 130 460 75 370 130 385ZM210 15L300 60V163L210 155V140L150 138V118H210ZM45 440L75 490 40 520 50 565 15 570 30 510 15 500ZM65 935L72 970 66 1000ZM222 755L240 765 225 780Z"/>
                    <path d="M0 1160L30 1170 50 1230 20 1290 0 1300ZM215 1140H352V1440L300 1480 240 1470 190 1400 210 1330 180 1290 200 1230Z"/>
                    <path transform="translate(0 330) scale(.5868 .523)" d="M10 1215L50 1200 90 1225 70 1240 85 1275 50 1285 30 1255ZM195 1300L250 1325 230 1335 200 1315ZM110 295L140 308 125 320Z"/>
                </g>

                <!-- streams -->
                <g stroke="#a9daef" stroke-width="3">
                    <path d="M900 380L930 400 960 380M940 520L1000 560M1180 400L1230 450M1250 520L1270 600 1240 640M1380 420L1400 440 1420 400M1540 380L1580 400M1430 640L1450 690 1400 740M1160 680L1180 730M1480 740L1520 700M1320 900L1330 960 1360 990M1490 1430L1540 1410M1200 1600L1230 1650 1260 1610M1540 1590L1510 1640M1040 2100L1070 2190M1140 2250L1180 2200M1440 2250L1400 2300M1350 2560L1400 2540 1430 2580M640 2440L700 2420 760 2440M900 2500L950 2560M260 640L290 600 330 610M180 900L260 890 300 860M210 660L260 740 280 780M230 1100L300 1060 350 1080M270 1000L340 1010M150 660L110 690M840 1840L870 1890 900 1850M600 2230L560 2260M1560 2280L1600 2330 1590 2400M960 1900L980 1960M1390 1800L1430 1840M1180 1700L1160 1660M100 2480L130 2600 200 2690M230 2560L280 2540"/>
                </g>

                <!-- administrative borders -->
                <g stroke="#a7a79c" stroke-width="2" stroke-dasharray="9 6" stroke-linecap="butt">
                    <path d="M1285 336L1284 430 1262 448 1300 500 1380 560 1440 540 1480 490 1560 500 1612 450 1590 380 1608 336M1090 540L1060 560 1120 620 1210 620 1290 640M1204 700L1230 760 1220 840 1160 960M920 960L1000 930 1100 960M1160 960L1060 1010 990 1010M1400 1060L1480 1120 1600 1150M1010 1240L1050 1260 1040 1310M1200 1290L1350 1340 1450 1300M950 1340L1020 1340 1090 1420 1180 1410M1040 1500L1110 1520 1100 1600 1180 1650M960 1760L1050 1790 1130 1760M1310 1500L1330 1640 1420 1720 1530 1700M1350 1880L1320 2010 1380 2100 1300 2200M1060 2060L1120 2150 1090 2220M780 2330L900 2350 940 2330M1430 2120L1560 2200 1650 2190M1280 2350L1400 2380 1500 2470M352 860L315 850 310 880 280 882 270 920 210 950 190 975 150 940 110 925M340 450L345 520 352 540M860 420L900 460 880 520M1030 520L1000 590M0 2110L40 2160"/>
                </g>
                <g stroke="#8ccb9a" stroke-width="3" stroke-dasharray="12 7" stroke-linecap="butt">
                    <path d="M1080 590L1108 650 1115 740 1070 790 1040 800 1060 860 1000 900 960 920 930 950 920 900M990 690L970 740 930 780 910 830"/>
                </g>

                <!-- roads and railways -->
                <use href="#roads" stroke="#dcc65c" stroke-width="8"/>
                <use href="#roads" stroke="#fde68c" stroke-width="5"/>
                <use href="#rail" stroke="#b5b5b5" stroke-width="6"/>
                <use href="#rail" stroke="#f4f4f4" stroke-width="3" stroke-dasharray="12 14" stroke-linecap="butt"/>
                <use href="#motorways" stroke="#f5a97a" stroke-width="13"/>
                <use href="#motorways" stroke="#ffc67f" stroke-width="9"/>
                <use href="#metro" stroke="#84a3d6" stroke-width="6"/>
                <use href="#metro" stroke="#ffffff" stroke-width="3" stroke-dasharray="12 14" stroke-linecap="butt"/>
                <path stroke="#ffffff" stroke-width="7" d="M0 425L55 458 120 510 165 522 205 518 250 495 300 470 335 455 345 420 352 345 370 336"/>
                <path stroke="#6b6b6b" stroke-width="3" stroke-dasharray="14 5 4 5" d="M0 425L55 458 120 510 165 522 205 518 250 495 300 470 335 455 345 420 352 345 370 336"/>
                <path stroke="#6f9bb5" stroke-width="3" stroke-dasharray="3 7" d="M0 1590C60 1480 60 1400 150 1350M10 1600C30 1540 20 1460 100 1380M85 1500C70 1600 100 1680 150 1740M0 1725C60 1710 100 1715 150 1740M0 1860C20 1760 60 1740 150 1740M0 1400L60 1580"/>
                <g id="map-labels"></g>
                <g font-weight="700" fill="#b5651d" stroke="#ffd9a0" stroke-width="6" paint-order="stroke" font-size="28">
                    <path id="line-pt" d="M1052 2460Q1150 2470 1200 2445T1300 2425" stroke="none" fill="none"/>
                    <path id="line-sj" d="M1578 2040Q1600 2130 1618 2200T1650 2330" stroke="none" fill="none"/>
                    <path id="line-ic" d="M14 1300L150 1470" stroke="none" fill="none"/>
                    <path id="line-gb" d="M1100 1300L1180 1400" stroke="none" fill="none"/>
                    <text><textPath href="#line-pt">평택영월고속도로</textPath></text>
                    <text><textPath href="#line-sj">세종포천고속도로</textPath></text>
                    <text><textPath href="#line-ic">인천대교고속도로</textPath></text>
                    <text><textPath href="#line-gb">속도로</textPath></text>
                </g>
                <path id="line-ferry" d="M20 1545L66 1465"/>
                <text font-size="26" fill="#41708f"><textPath href="#line-ferry">4시간</textPath></text>
                <g id="map-markers"></g>
            </svg>

            <!-- Map tools -->
            <div class="absolute left-[27px] top-[26px] flex gap-[16px] text-[31px] font-bold text-[#334155]">
                <button class="h-[83px] px-[30px] pt-[3px] flex items-center gap-[15px] rounded-[26px] border-[3px] border-[#e2e8f0] bg-white/95 shadow-[0_5px_20px_rgba(0,0,0,0.1)]">
                    <svg class="h-[31px] mb-[4px] flex-none" viewBox="24 0 528 512" fill="currentColor"><use href="#i-layers"/></svg>지적편집도
                </button>
                <button class="h-[83px] px-[30px] pt-[3px] flex items-center gap-[15px] rounded-[26px] border-[3px] border-[#e2e8f0] bg-white/95 shadow-[0_5px_20px_rgba(0,0,0,0.1)]">
                    <svg class="h-[31px] mb-[4px] flex-none" viewBox="0 0 512 512" fill="none" stroke="currentColor" stroke-width="62" stroke-linecap="round" stroke-linejoin="round"><path d="M64 64L152 448 256 96 360 448 448 64M32 256H480"/></svg>실거래가
                </button>
                <button class="h-[83px] px-[30px] pt-[3px] flex items-center gap-[15px] rounded-[26px] border-[3px] border-[#e2e8f0] bg-white/95 shadow-[0_5px_20px_rgba(0,0,0,0.1)]">
                    <svg class="h-[31px] mb-[4px] flex-none" viewBox="0 0 512 512" fill="currentColor"><use href="#i-street"/></svg>로드뷰
                </button>
            </div>

            <!-- Transaction price menu -->
            <div class="absolute left-[300px] top-[125px] w-[470px] p-[15px] rounded-[31px] border-[3px] border-[#e2e8f0] bg-white shadow-[0_20px_60px_rgba(0,0,0,0.22)]">
                <div class="grid grid-cols-2 gap-[15px] text-[28px] font-bold">
                    <button class="h-[71px] pt-[2px] rounded-[20px] bg-[#e67e22] text-white">확인</button>
                    <button class="h-[71px] rounded-[20px] border-[3px] border-[#e2e8f0] bg-[#f8fafc] text-[#475569]">전체 해제</button>
                </div>
                <div id="price-types" class="mt-[16px] flex flex-col"></div>
                <p class="mt-[19px] pt-[15px] border-t-[3px] border-[#f1f5f9] font-['Noto_Sans_CJK_KR',sans-serif] text-[25px] leading-[38px] break-all text-[#94a3b8]">출처 국토교통부 실거래가 · 최근 3년 · 해제거래 제외<br>줌아웃=시·구·동 집계 / 확대=단지별 · 단지 클릭 시 상세</p>
            </div>

            <!-- Scale and attribution -->
            <div class="absolute left-[26px] bottom-[10px] flex items-end text-black">
                <div class="mb-[16px] w-[148px] h-[18px] border-[5px] border-t-0 border-black"></div>
                <span class="ml-[9px] text-[26px] leading-[36px]">8km</span>
                <span class="ml-[18px] text-[32px] leading-[48px] font-medium">kakao</span>
            </div>
            <button class="absolute left-[46px] bottom-[46px] size-[138px] flex items-center justify-center rounded-full bg-[#e67e22] text-white shadow-[0_10px_40px_rgba(230,126,34,0.45)]" aria-label="고객센터">
                <svg class="h-[52px]" viewBox="0 0 512 512" fill="currentColor"><use href="#i-headset"/></svg>
            </button>
        </section>

        <!-- Splitter -->
        <div class="relative z-10 w-6 flex-none border-r-[3px] border-[#e2e8f0] bg-linear-to-r from-[#f8fafc] to-[#edf1f5]">
            <button class="absolute left-[-22px] top-[957px] w-[67px] h-[100px] flex items-center justify-center rounded-[30px] border-[3px] border-[#cbd5e1] bg-white text-[#64748b] shadow-[0_5px_20px_rgba(0,0,0,0.12)]" aria-label="너비 조절">
                <svg class="w-[28px]" viewBox="0 0 28 20" fill="currentColor"><path d="M8 8H20V3.5Q20 2 21.3 3L27.5 9Q28 10 27.5 11L21.3 17Q20 18 20 16.5V12H8V16.5Q8 18 6.7 17L.5 11Q0 10 .5 9L6.7 3Q8 2 8 3.5Z"/></svg>
            </button>
        </div>

        <!-- Listing panel -->
        <section class="flex-1 min-w-0 flex flex-col bg-white">
            <div class="h-[143px] px-[41px] flex items-center justify-between border-b-[3px] border-[#f0e4da] bg-[#fff5ea]">
                <div class="pt-[2px] flex items-center gap-[26px]">
                    <svg class="h-[36px] text-[#e67e22]" viewBox="0 0 512 512" fill="currentColor"><use href="#i-list"/></svg>
                    <h2 class="pt-[4px] text-[36px] font-bold text-[#1a3f5f]">매물 목록</h2>
                    <span class="h-[51px] px-[22px] pt-[4px] flex items-center rounded-full bg-[#edf2f7] text-[28px] font-semibold text-[#4a5568]">전체 31</span>
                </div>
                <div class="h-[80px] flex overflow-hidden rounded-[20px] border-[3px] border-[#e2e8f0] bg-white text-[31px]">
                    <button class="w-[162px] pt-[2px] flex items-center justify-center gap-[10px] font-semibold text-[#64748b]">
                        <svg class="h-[31px]" viewBox="0 0 512 512" fill="currentColor"><use href="#i-table-list"/></svg>목록
                    </button>
                    <button class="w-[162px] pt-[2px] flex items-center justify-center gap-[10px] bg-[#e67e22] font-bold text-white">
                        <svg class="h-[31px]" viewBox="0 0 512 512" fill="currentColor"><use href="#i-table"/></svg>시트
                    </button>
                </div>
            </div>
            <div class="h-[90px] pl-[36px] flex items-center gap-[20px] border-b-[3px] border-[#fcd9ab] bg-[#fff8ec] text-[32px] text-[#7c2d12]">
                <svg class="h-[38px] text-[#e67e22]" viewBox="0 0 512 512" fill="currentColor"><use href="#i-gift"/></svg>
                <p>무료 체험 중 — 매물 <b>31</b> / 1,000건</p>
            </div>

            <div class="mt-[15px] mx-[30px] h-[108px] flex items-center shadow-[0_5px_8px_rgba(0,0,0,0.04)]">
                <button class="h-[67px] px-[26px] flex items-center rounded-full border-[3px] border-[#e2e8f0] bg-[#f8fafc] text-[28px] font-semibold text-[#64748b]">
                    <svg class="h-[28px]" viewBox="0 0 448 512" fill="currentColor"><use href="#i-tag"/></svg>
                    <span class="ml-[13px] pt-[2px]">데이터출처</span>
                    <span class="ml-[13px] h-[34px] px-[15px] flex items-center rounded-full bg-[#edf1f5] text-[24px] text-[#475569]">전체</span>
                    <svg class="ml-[15px] w-[25px]" viewBox="0 0 25 16" fill="none" stroke="currentColor" stroke-width="4" stroke-linecap="round" stroke-linejoin="round"><path d="M2 3L12.5 13 23 3"/></svg>
                </button>
            </div>

            <div class="mt-[30px] ml-[72px] mr-[30px] overflow-hidden">
                <div id="tabs" class="h-[123px] flex items-center gap-[15px] bg-[#f8fafc] text-[31px] font-semibold text-[#475569]"></div>
                <table class="w-max border-collapse text-[28px] leading-[38px]">
                    <thead>
                        <tr id="sheet-head" class="h-[74px] bg-[#f8fafc] text-left"></tr>
                    </thead>
                    <tbody id="sheet-body"></tbody>
                </table>
            </div>
        </section>

        <!-- Action rail -->
        <aside id="actions" class="w-[154px] flex-none pt-[21px] pl-[10px] pr-[11px] flex flex-col gap-[10px] border-l-[3px] border-[#e2e8f0] bg-[#f8fafc]"></aside>
    </main>

    <script>
        const priceTypes = [
            ['아파트 매매', '#1971c2'], ['아파트 전월세', '#4dabf7'], ['오피스텔 매매', '#2f9e44'], ['오피스텔 전월세', '#69db7c'],
            ['연립·다세대 매매', '#e8590c'], ['연립·다세대 전월세', '#ffa94d'], ['단독·다가구 매매', '#9c36b5'], ['단독·다가구 전월세', '#da77f2'],
            ['토지 매매', '#a9773e'], ['상업·업무용 매매', '#c2255c'], ['분양권·입주권', '#6741d9'], ['공장·창고 매매', '#495057']
        ];
        document.getElementById('price-types').innerHTML = priceTypes.map(([name, color]) => `
            <label class="h-[79px] pl-[20px] flex items-center text-[31px] text-[#334155]">
                <input type="checkbox" class="appearance-none size-[34px] rounded-[7px] border-[3px] border-[#767676] bg-white">
                <span class="ml-[20px] size-[31px] rounded-[8px]" style="background:${color}"></span>
                <span class="ml-[19px]">${name}</span>
            </label>`).join('');

        const tabs = [['아파트', 10], ['빌라/투룸+', 4], ['원룸', 3], ['오피스텔', 4], ['상가', 3], ['사무실', 2], ['지산', 2], ['토지', 1], ['창고/공장', 1], ['미분류', 1]];
        document.getElementById('tabs').innerHTML = tabs.map(([name, count], i) => {
            const look = i === 0 ? 'border-[#e67e22] bg-[#e67e22] text-white' : i === 9 ? 'border-[#f0a020] bg-white text-[#b45309]' : 'border-[#e2e8f0] bg-white';
            const badge = i === 0 ? 'bg-white/30' : 'bg-[#f8fafc] text-[#475569]';
            return `<button class="flex-none h-[83px] px-[30px] pt-[2px] flex items-center gap-[15px] rounded-full border-[3px] ${look}">${name}
                <span class="min-w-[58px] h-[46px] px-[14px] flex items-center justify-center rounded-full text-[28px] ${badge}">${count}</span></button>`;
        }).join('');

        const columns = [
            ['데이터 수정', 'w-[478px]'], ['물건유형', 'w-[172px]'], ['거래방식', 'w-[174px]'], ['진행상태', 'w-[174px]'], ['물건순위', 'w-[174px]'],
            ['담당자', 'w-[149px]'], ['주소', 'w-[494px]'], ['단지명', 'w-[261px]'], ['동', 'w-[88px]']
        ];
        const box = label => `<input type="checkbox" aria-label="${label}" class="block appearance-none size-[33px] rounded-[7px] border-[3px] border-[#767676] bg-white">`;
        const line = 'border-[3px] border-[#e2e8f0]';
        document.getElementById('sheet-head').innerHTML =
            `<th class="w-[57px] pl-[10px] pb-[6px] ${line} shadow-[inset_0_-6px_0_#cbd5e1]">${box('전체 선택')}</th>
             <th class="w-[215px] pl-[9px] text-[27px] font-bold ${line} shadow-[inset_0_-6px_0_#cbd5e1]">데이터출처</th>` +
            columns.map(([name, width]) => `
            <th class="${width} pl-[10px] pr-[16px] ${line} shadow-[inset_0_-6px_0_#cbd5e1]"><div class="pt-[2px] flex items-center justify-between whitespace-nowrap">${name}
                <svg class="flex-none w-[23px]" viewBox="0 0 24 21" fill="#adb5bd"><path d="M0 0H24L12 21Z"/></svg></div></th>`).join('');

        const rows = [
            ['main', '2026-05-17T11:57:44.806233+00:00', '매매', '확정매물', '김조부', '서울 마포구 상수동 마포래미안푸르지오', '마포래미안푸르지오'],
            ['main', '2026-06-17T08:13:11.106Z', '전세', '확정매물', '이부장', '서울 마포구 공덕동 공덕자이', '공덕자이'],
            ['main', '2026-05-18T11:57:44.806233+00:00', '매매', '보류', '김조부', '서울 용산구 한남동 한남더힐', '한남더힐'],
            ['sub1', '2026-05-19T11:57:44.806233+00:00', '월세', '확정매물', '김부장', '서울 송파구 신천동 파크리오', '파크리오'],
            ['main', '2026-10-22T06:10:39.838169+00:00', '매매', '확정매물', '김조부', '서울 송파구 잠실동 19', '잠실엘스'],
            ['main', '2026-05-20T11:57:44.806233+00:00', '전세', '확정매물', '이부장', '서울 서초구 잠원동 신반포자이', '신반포자이'],
            ['main', '2026-05-21T07:57:44.806233+00:00', '매매', '확정매물', '박실장', '서울 서초구 반포동 래미안퍼스티지', '래미안퍼스티지'],
            ['sub1', '2026-05-21T11:57:44.806233+00:00', '월세', '계약중', '김부장', '서울 강남구 도곡동 도곡렉슬', '도곡렉슬'],
            ['main', '2026-05-22T11:57:44.806233+00:00', '전세', '확정매물', '이부장', '서울 강남구 청담동 134 청담자이', '청담자이'],
            ['main', '2026-10-23T07:10:39.838169+00:00', '매매', '확정매물', '김조부', '서울 강남구 역삼동 707-25 e편한세상', '역삼 e편한세상']
        ];
        document.getElementById('sheet-body').innerHTML = rows.map(r => {
            const badge = r[0] === 'main'
                ? '<span class="inline-flex items-center h-[48px] px-[15px] rounded-full border-[3px] border-[#cbd5e1] bg-[#f1f5f9] text-[26px] font-semibold text-[#475569]">main · 주계정</span>'
                : '<span class="inline-flex items-center h-[48px] px-[15px] rounded-full border-[3px] border-[#5eead4] bg-[#ccfbf1] text-[26px] font-semibold text-[#0f766e]">sub1 · 김부장</span>';
            const cells = ['아파트', r[2], r[3], '', r[4], r[5], r[6], ''];
            return `<tr class="h-[82px]"><td class="pl-[10px] pb-[15px] ${line}">${box('선택')}</td><td class="pl-[9px] ${line}"><div class="flex">${badge}</div></td>
                <td class="pl-[10px] pb-[5px] text-[27px] whitespace-nowrap ${line}">${r[1]}</td>` +
                cells.map(c => `<td class="pl-[9px] pb-[5px] text-[29px] whitespace-nowrap ${line}">${c}</td>`).join('') + '</tr>';
        }).join('');

        const actions = [
            ['전체', 'check-double', 448], ['해제', 'xmark', 384], ['소개', 'copy', 448], ['맞춤매물', 'link', 640], ['담기', 'box', 448], ['전송', 'plane', 512],
            ['엑셀', 'excel', 384], ['이미지', 'images', 576], ['삭제', 'trash', 448], ['필터↺', 'filter', 512], ['새로고침', 'rotate', 512]
        ];
        document.getElementById('actions').innerHTML = actions.map(([name, icon, w]) => `
            <button class="h-[133px] flex flex-col items-center justify-center gap-[11px] rounded-[26px] border-[3px] border-[#e5e7eb] bg-white text-[28px] leading-[38px] font-bold text-[#475569] whitespace-nowrap">
                <svg class="h-[36px]" viewBox="0 0 ${w} 512" fill="currentColor"><use href="#i-${icon}"/></svg>${name}
            </button>`).join('');

        // Map labels
        const halo = 'stroke="#ffffff" stroke-width="7" paint-order="stroke"';
        const cities = [
            ['양주', 1130, 472], ['의정부', 1104, 594], ['남양주', 1482, 860], ['구리', 1302, 968], ['하남', 1479, 1111], ['과천', 1008, 1396], ['성남', 1296, 1422],
            ['광주', 1564, 1396], ['안양', 938, 1487], ['의왕', 969, 1617], ['수원', 1095, 1829], ['용인', 1404, 1887], ['화성', 685, 1994], ['오산', 1195, 2124],
            ['평택', 1270, 2533], ['안성', 1618, 2493]
        ];
        const junctions = [
            ['소흘', 1329, 392], ['성수', 1095, 1102], ['동작대교', 979, 1196], ['올림픽대교', 1260, 1135], ['서하남', 1386, 1172], ['산곡', 1536, 1259], ['판교', 1231, 1458],
            ['태전', 1524, 1487], ['쌍동', 1642, 1522], ['신갈', 1250, 1759], ['용인', 1555, 1855], ['마도', 568, 2023], ['서오산', 1030, 2055], ['서평택', 802, 2372],
            ['평택', 974, 2431], ['안성', 1324, 2421], ['포승', 763, 2594], ['', 867, 2688], ['연수', 266, 1444]
        ];
        const routes = [['47', 1501, 481], ['46', 1402, 827], ['3', 1300, 1283], ['82', 640, 2250], ['43', 860, 2217], ['39', 848, 2285], ['45', 1454, 2030], ['17', 1659, 1921], ['42', 239, 1280], ['77', 275, 1378]];
        const expressways = [['400', 211, 842], ['29', 1289, 705], ['171', 1144, 1707], ['17', 1015, 2277]];
        const places = [
            ['북한산', 1015, 825, 31, '#3f8a3f'], ['국립공원', 1015, 861, 31, '#3f8a3f'], ['남한산성', 1425, 1329, 31, '#3f8a3f'], ['도립공원', 1425, 1365, 31, '#3f8a3f'],
            ['곤지암리', 1611, 1692, 33, '#3a8fc4'], ['스키장', 1646, 1729, 33, '#3a8fc4'], ['지산', 1648, 2003, 33, '#3a8fc4'], ['동그락', 1650, 2305, 33, '#3f6f94'],
            ['제부도', 252, 2076, 33, '#41708f'], ['영종도', 61, 1215, 33, '#41708f'], ['물치도', 181, 1229, 33, '#41708f']
        ];
        document.getElementById('map-labels').innerHTML =
            cities.map(([t, x, y]) => `<circle cx="${x}" cy="${y}" r="11" fill="#fff" stroke="#333" stroke-width="3"/><circle cx="${x}" cy="${y}" r="5" fill="#333"/>
                <text x="${x + 15}" y="${y + 14}" font-size="38" font-weight="500" fill="#333" ${halo}>${t}</text>`).join('') +
            `<circle cx="990" cy="1039" r="15" fill="#fbe3a8" stroke="#222" stroke-width="4"/><circle cx="990" cy="1039" r="7" fill="#222"/>
             <text x="1012" y="1056" font-size="46" font-weight="500" fill="#111" ${halo}>서울</text>` +
            junctions.map(([t, x, y]) => `<circle cx="${x}" cy="${y}" r="22" fill="#fbe0a0" stroke="#a08a50" stroke-width="3"/>
                <text x="${x}" y="${y + 8}" font-size="22" text-anchor="middle" fill="#7a6430">JC</text>
                <text x="${x}" y="${y + 50}" font-size="29" font-weight="500" text-anchor="middle" fill="#6b4a33" ${halo}>${t}</text>`).join('') +
            routes.map(([t, x, y]) => `<ellipse cx="${x}" cy="${y}" rx="30" ry="23" fill="#5276ef" stroke="#3c5ccc" stroke-width="2"/>
                <text x="${x}" y="${y + 9}" font-size="26" font-weight="600" text-anchor="middle" fill="#fff">${t}</text>`).join('') +
            expressways.map(([t, x, y]) => `<g transform="translate(${x} ${y})"><path d="M-30 -26Q-15 -24 0 -34Q15 -24 30 -26L28 -8Q36 22 14 26Q4 28 0 33Q-4 28 -14 26Q-36 22 -28 -8Z" fill="#5276ef" stroke="#fff" stroke-width="4"/>
                <path d="M-30 -26Q-15 -24 0 -34Q15 -24 30 -26L26 -17H-26Z" fill="#ee5350"/></g>
                <text x="${x}" y="${y + 10}" font-size="27" font-weight="600" text-anchor="middle" fill="#fff">${t}</text>`).join('') +
            [[1015, 771], [1425, 1273]].map(([x, y]) => `<circle cx="${x}" cy="${y}" r="21" fill="#6cae4c"/><path d="M${x} ${y - 14}L${x + 12} ${y + 5}H${x + 2}V${y + 12}H${x - 2}V${y + 5}H${x - 12}Z" fill="#fff"/>`).join('') +
            '<circle cx="1642" cy="1636" r="21" fill="#3a9bd4"/><path d="M1632 1628L1645 1638 1640 1648M1630 1646L1652 1652" stroke="#fff" stroke-width="4"/>' +
            places.map(([t, x, y, s, c]) => `<text x="${x}" y="${y}" font-size="${s}" font-weight="500" text-anchor="middle" fill="${c}" ${halo}>${t}</text>`).join('');

        // Clusters: count, x, y, radius, ring, fill, text size
        const markers = [
            [3, 894, 1092, 67, '#0ea5e9', '#e67e22', 48], [1, 388, 1260, 55, '#fff', '#e67e22', 40], [15, 1110, 1216, 79, '#0ea5e9', '#e67e22', 54], [4, 1278, 1221, 67, '#0ea5e9', '#e67e22', 48],
            [1, 932, 1503, 55, '#fff', '#0ea5e9', 40], [1, 1260, 1563, 55, '#fff', '#e67e22', 40], [1, 948, 2010, 55, '#fff', '#e67e22', 40]
        ];
        document.getElementById('map-markers').innerHTML = markers.map(([n, x, y, r, ring, fill, size]) => `
            <circle cx="${x}" cy="${y}" r="${r}" fill="${fill}" stroke="${ring}" stroke-width="9" filter="url(#drop)"/>
            <text x="${x}" y="${y + size * 0.36}" font-family="Open Sans, Noto Sans, sans-serif" font-size="${size}" font-weight="800" text-anchor="middle" fill="#fff">${n}</text>`).join('');
    </script>
</body>
</html>
